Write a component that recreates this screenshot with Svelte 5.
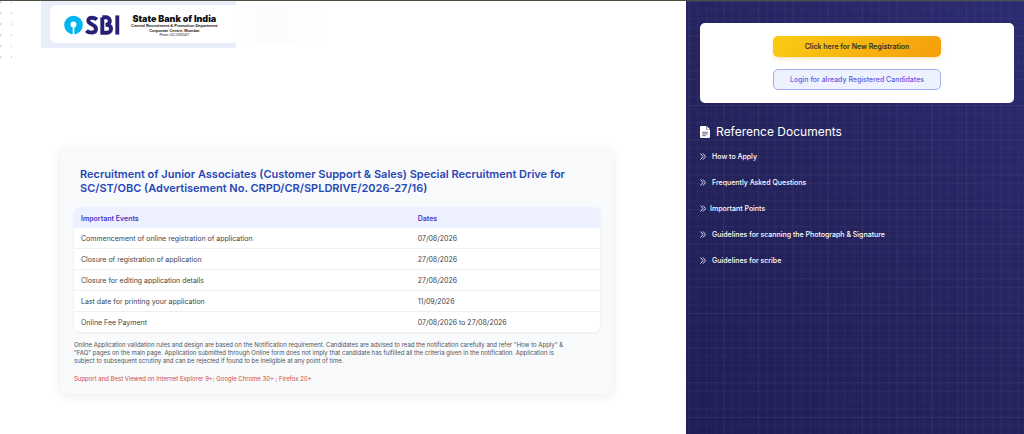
<script>
  const events = [
    { name: "Commencement of online registration of application", date: "07/08/2026" },
    { name: "Closure of registration of application", date: "27/08/2026" },
    { name: "Closure for editing application details", date: "27/08/2026" },
    { name: "Last date for printing your application", date: "11/09/2026" },
    { name: "Online Fee Payment", date: "07/08/2026 to 27/08/2026" },
  ];

  const documents = [
    { title: "How to Apply" },
    { title: "Frequently Asked Questions" },
    { title: "Important Points", tight: true },
    { title: "Guidelines for scanning the Photograph & Signature" },
    { title: "Guidelines for scribe" },
  ];
</script>

<div class="page">
  <main class="content">
    <header class="masthead">
      <div class="brand">
        <svg class="logo" viewBox="0 0 56 20" role="img" aria-label="SBI">
          <circle cx="9.5" cy="10" r="9.3" fill="#00b5ef" />
          <circle cx="9.5" cy="9.6" r="3" fill="#fff" />
          <path d="M8.7 11h1.6v9h-1.6z" fill="#fff" />
          <g fill="none" stroke="#292075" stroke-width="3.9">
            <path d="M33 4.5C31 2.6 24.3 1.2 24.3 5.6C24.3 10.3 32 8.7 32 13.9C32 18.7 24.8 18.3 22.4 15.6" />
            <path d="M38.3 2.3V17.7H43C48.4 17.7 48.4 9.9 43 9.9H41.5M38.3 2.3H42.3C47 2.3 47 9.5 42.3 9.5" />
            <path d="M53.3.4v19.2" />
          </g>
        </svg>
        <div class="bank">
          <strong>State Bank of India</strong>
          <span>Central Recruitment &amp; Promotion Department</span>
          <span>Corporate Centre, Mumbai</span>
          <small>Phone: 022-22820427</small>
        </div>
      </div>
    </header>

    <section class="notice">
      <h1>
        Recruitment of Junior Associates (Customer Support &amp; Sales) Special Recruitment Drive for
        SC/ST/OBC (Advertisement No. CRPD/CR/SPLDRIVE/2026-27/16)
      </h1>

      <table>
        <thead>
          <tr>
            <th>Important Events</th>
            <th>Dates</th>
          </tr>
        </thead>
        <tbody>
          {#each events as event}
            <tr>
              <td>{event.name}</td>
              <td>{event.date}</td>
            </tr>
          {/each}
        </tbody>
      </table>

      <p class="rules">
        Online Application validation rules and design are based on the Notification requirement.
        Candidates are advised to read the notification carefully and refer "How to Apply" &amp;
        "FAQ" pages on the main page. Application submitted through Online form does not imply that
        candidate has fulfilled all the criteria given in the notification. Application is subject
        to subsequent scrutiny and can be rejected if found to be ineligible at any point of time.
      </p>
      <p class="support">
        Support and Best Viewed on Internet Explorer 9+; Google Chrome 30+ ; Firefox 20+
      </p>
    </section>
  </main>

  <aside class="sidebar">
    <svg class="mesh" viewBox="0 0 390 500" preserveAspectRatio="xMinYMin slice" aria-hidden="true">
      <defs>
        <pattern id="minor" x="3" width="10" height="10" patternUnits="userSpaceOnUse">
          <path d="M.5 0v10M0 .5h10" />
        </pattern>
        <pattern id="major" x="3" width="40" height="40" patternUnits="userSpaceOnUse">
          <path d="M.5 0v40M0 .5h40" />
        </pattern>
      </defs>
      <rect width="390" height="1000" fill="url(#minor)" />
      <rect width="390" height="1000" fill="url(#major)" />
    </svg>

    <div class="actions">
      <button class="register" type="button">Click here for New Registration</button>
      <button class="login" type="button">Login for already Registered Candidates</button>
    </div>

    <h2>
      <svg viewBox="0 0 10 12" aria-hidden="true">
        <path d="M1.2 0H6.2V3.6H10V10.8Q10 12 8.8 12H1.2Q0 12 0 10.8V1.2Q0 0 1.2 0Z" fill="#fff" />
        <path d="M6.6 0L10 3.2H6.6Z" fill="#fff" />
        <path d="M2.2 6.3h5.6M2.2 8h5.6M2.2 9.7h3.6" stroke="#292965" stroke-width=".7" />
      </svg>
      Reference Documents
    </h2>

    <ul>
      {#each documents as doc}
        <li>
          <a href="#documents" class:tight={doc.tight}>
            <svg viewBox="0 0 6 8" aria-hidden="true">
              <path d="M.5.5L3 3.5L.5 6.5M3 .5L5.5 3.5L3 6.5" />
            </svg>
            {doc.title}
          </a>
        </li>
      {/each}
    </ul>
  </aside>
</div>

<style>
  :global(body) {
    margin: 0;
    background: #fff;
    font-family: Inter, "Liberation Sans", sans-serif;
  }

  h1,
  h2,
  p,
  ul {
    margin: 0;
    padding: 0;
  }

  .page {
    display: grid;
    grid-template-columns: 67fr 33fr;
    min-height: 100vh;
    box-sizing: border-box;
    border-top: 1px solid #4b5141;
  }

  .content {
    position: relative;
    padding-bottom: 40px;
  }

  .content::before {
    position: absolute;
    top: 0;
    left: 0;
    width: 12px;
    height: 58px;
    background: radial-gradient(circle at 0 1px, #d6d6fa 1px, transparent 2px) 0 0 / 11px 11px;
    content: "";
  }

  .masthead {
    width: 195px;
    height: 47px;
    box-sizing: border-box;
    margin-left: 41px;
    padding: 4px 0 0 9px;
    background: #e9edfc;
  }

  .brand {
    display: flex;
    align-items: center;
    gap: 11px;
    width: 276px;
    height: 38px;
    box-sizing: border-box;
    padding: 2px 0 0 14px;
    border-radius: 6px;
    background: linear-gradient(90deg, #fff 65%, #fcfcfc 80%, #fff);
  }

  .logo {
    width: 56px;
    height: 20px;
  }

  .bank {
    display: flex;
    flex-direction: column;
    align-items: center;
    color: #111;
    font-family: "Liberation Sans", sans-serif;
    font-size: 4px;
    font-weight: 700;
    line-height: 5px;
    white-space: nowrap;
  }

  .bank strong {
    font-family: Inter, sans-serif;
    font-size: 9px;
    font-weight: 900;
    line-height: 9px;
  }

  .bank small {
    font-size: 3px;
    font-weight: 400;
    line-height: 4px;
  }

  .notice {
    margin: 100px 73px 0 60px;
    padding: 19px 13px 11px 14px;
    border-radius: 8px;
    background: #f8fafc;
    box-shadow: 0 2px 10px rgb(15 23 42 / 9%);
  }

  h1 {
    margin: 0 6px 12px;
    color: #2947b5;
    font-size: 11px;
    font-weight: 600;
    line-height: 14px;
  }

  table {
    width: 100%;
    height: 124px;
    border-spacing: 0;
    border-radius: 6px;
    overflow: hidden;
    background: #fff;
    box-shadow: 0 1px 3px rgb(15 23 42 / 8%);
    color: #414449;
    font-size: 7px;
    line-height: 11px;
    text-align: left;
  }

  th,
  td {
    padding: 5px 7px 4px;
  }

  th {
    padding-top: 6px;
    background: #edf0fe;
    color: #4935c8;
    font-weight: 600;
  }

  th:first-child {
    width: 64%;
  }

  tbody tr:not(:last-child) td {
    border-bottom: 1px solid #edf0f3;
  }

  .rules {
    margin-top: 9px;
    padding-right: 30px;
    color: #50545b;
    font-size: 6px;
    line-height: 8px;
  }

  .support {
    margin-top: 10px;
    color: #d0493f;
    font-size: 6px;
    line-height: 8px;
  }

  .sidebar {
    position: relative;
    padding: 22px 10px 22px 14px;
    background: linear-gradient(45deg, #1f1e55, #25245e 50%, #2b2b72);
    color: #fff;
  }

  .mesh {
    position: absolute;
    inset: 0;
    width: 100%;
    height: 100%;
  }

  .mesh path {
    fill: none;
    stroke: rgb(255 255 255 / 4%);
  }

  .actions {
    position: relative;
    display: flex;
    flex-direction: column;
    align-items: center;
    gap: 12px;
    padding: 13px 0;
    border-radius: 5px;
    background: #fff;
  }

  button {
    width: 168px;
    height: 21px;
    padding: 0;
    border-radius: 5px;
    font-family: inherit;
    font-size: 7px;
    font-weight: 500;
    cursor: pointer;
  }

  .register {
    border: 0;
    background: linear-gradient(135deg, #facc15, #f59e0b);
    box-shadow: 0 2px 4px rgb(245 158 11 / 25%);
    color: #312e2b;
    font-weight: 600;
  }

  .login {
    border: 1px solid #a5aafa;
    background: #eef2ff;
    color: #6659e6;
  }

  h2 {
    position: relative;
    display: flex;
    align-items: center;
    gap: 6px;
    margin-top: 21px;
    font-size: 12px;
    font-weight: 400;
    line-height: 16px;
  }

  h2 svg {
    width: 10px;
    height: 12px;
  }

  ul {
    position: relative;
    display: grid;
    gap: 14px;
    margin-top: 11px;
    list-style: none;
  }

  a {
    display: flex;
    align-items: center;
    gap: 6px;
    color: #fff;
    font-size: 7px;
    font-weight: 500;
    line-height: 12px;
    text-decoration: none;
  }

  a.tight {
    gap: 4px;
  }

  a svg {
    width: 6px;
    height: 8px;
    fill: none;
    stroke: #dcdcef;
  }
</style>
